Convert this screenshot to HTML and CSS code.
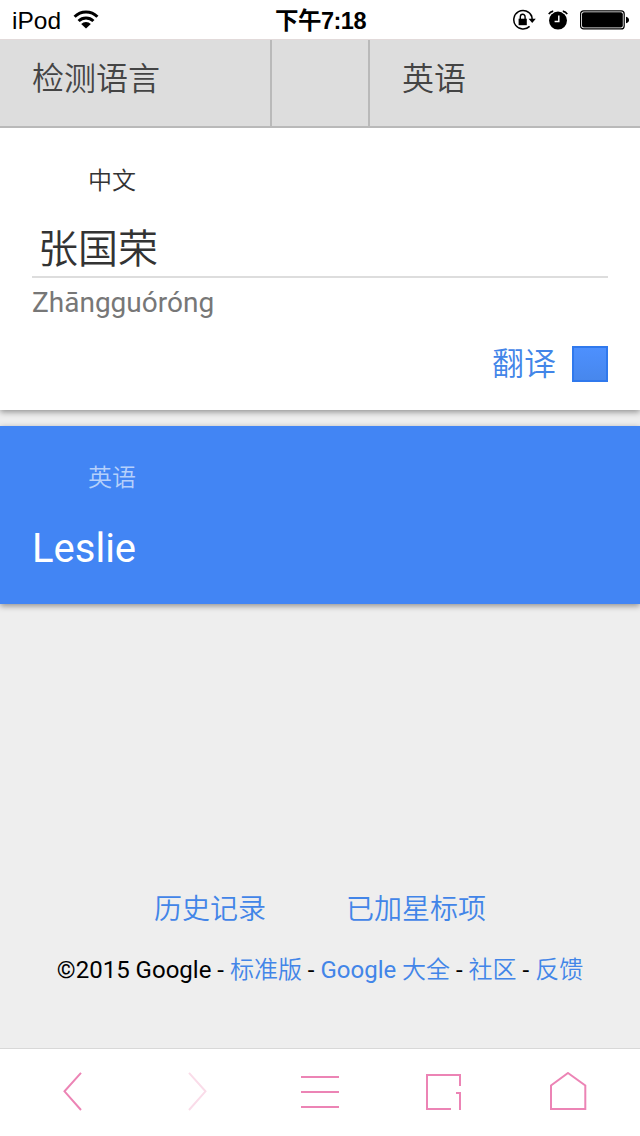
FILE: index.html
```html
<!DOCTYPE html>
<html lang="zh-CN">
<head>
	<meta charset="UTF-8">
	<title>Google 翻译</title>
	<meta name="viewport" content="width=device-width, initial-scale=1.0">
	<link rel="stylesheet" href="styles.css">
</head>
<body>

	<div class="status-bar">
		<div class="status-left">
			<span>iPod</span>
			<svg class="wifi" width="26" height="20" viewBox="0 0 26 20">
				<g fill="none" stroke="#000" stroke-width="3">
					<path d="M1.6 6.7a16.2 16.2 0 0 1 22.8 0"/>
					<path d="M5.6 11a10.5 10.5 0 0 1 14.8 0"/>
				</g>
				<path d="M13 18.6l-4.8-4.5a6.8 6.8 0 0 1 9.6 0z"/>
			</svg>
		</div>
		<div class="status-time">下午7:18</div>
		<div class="status-right">
			<svg class="lock" width="24" height="22" viewBox="0 0 24 22">
				<path d="M19.7 7.2A9.3 9.3 0 1 0 17.6 17.4" fill="none" stroke="#000" stroke-width="1.5"/>
				<path d="M19.2 6.1a9.3 9.3 0 0 1 .9 4" fill="none" stroke="#000" stroke-width="1.5"/>
				<path d="M16.6 9.7h7.2l-3.6 4.2z"/>
				<path d="M6.6 9.7h8.2v6.5H6.6z"/>
				<path d="M8.3 10V7.9a2.4 2.7 0 0 1 4.8 0V10" fill="none" stroke="#000" stroke-width="1.4"/>
			</svg>
			<svg class="alarm" width="20" height="20" viewBox="0 0 20 20">
				<circle cx="10" cy="10.6" r="9"/>
				<path d="M.8 4.2Q2 1.6 5.2 1.1M19.2 4.2Q18 1.6 14.8 1.1" fill="none" stroke="#fff" stroke-width="4"/>
				<path d="M.8 4.2Q2 1.6 5.2 1.1M19.2 4.2Q18 1.6 14.8 1.1" fill="none" stroke="#000" stroke-width="1.6"/>
				<path d="M10.8 5.5v6H6.6" fill="none" stroke="#fff" stroke-width="1.5"/>
			</svg>
			<svg class="battery" width="49" height="20" viewBox="0 0 49 20">
				<rect x=".6" y=".9" width="43.6" height="18" rx="3" fill="none" stroke="#000" stroke-width="1.2"/>
				<rect x="2" y="2.3" width="40.8" height="15.2" rx="2"/>
				<path d="M46 6.7q3 .8 3 3.3t-3 3.3z"/>
			</svg>
		</div>
	</div>

	<div class="lang-bar">
		<div class="lang lang-from">检测语言</div>
		<div class="lang lang-swap"></div>
		<div class="lang lang-to">英语</div>
	</div>

	<div class="card source">
		<div class="label">中文</div>
		<div class="input">张国荣</div>
		<div class="translit">Zhāngguóróng</div>
		<div class="submit">
			<a>翻译</a>
			<span class="go"></span>
		</div>
	</div>

	<div class="card result">
		<div class="label">英语</div>
		<div class="output">Leslie</div>
	</div>

	<div class="links">
		<a>历史记录</a>
		<a>已加星标项</a>
	</div>

	<div class="footer">©2015 Google - <a>标准版</a> - <a><span>Google</span> 大全</a> - <a>社区</a> - <a>反馈</a></div>

	<div class="toolbar">
		<svg viewBox="0 0 40 40"><path d="M29 .8L12.5 19.3 29 38"/></svg>
		<svg class="disabled" viewBox="0 0 40 40"><path d="M13 .8l16.5 18.5L13 38"/></svg>
		<svg viewBox="0 0 40 40"><path d="M1 5h38M1 20h38M1 35h38"/></svg>
		<svg viewBox="0 0 40 40"><path d="M27 37H3V3h33v11M32 21h4v17"/></svg>
		<svg viewBox="0 0 40 40"><path d="M20 1l17.3 12.5V37H3V13.5z"/></svg>
	</div>

</body>
</html>
```

FILE: styles.css
```css
* {
	margin: 0;
	padding: 0;
	box-sizing: border-box;
}

body {
	display: flex;
	flex-direction: column;
	height: 1136px;
	overflow: hidden;
	background: #eee;
	font-family: Roboto, "Noto Sans CJK SC", sans-serif;
	font-weight: 350;
}

a {
	color: #4285e8;
}

/* status bar */

.status-bar {
	display: grid;
	grid-template-columns: 1fr auto 1fr;
	align-items: center;
	height: 39px;
	padding: 1px 11px 0 12px;
	background: #fff;
	color: #000;
	font: 24.5px/36px "Liberation Sans", "Noto Sans CJK SC", sans-serif;
}

.status-left,
.status-right {
	display: flex;
	align-items: center;
}

.status-left span {
	padding-top: 2px;
}

.status-right {
	justify-content: flex-end;
}

.wifi {
	margin-left: 12px;
}

.status-time {
	padding-top: 2px;
	font-size: 23.5px;
	font-weight: bold;
	letter-spacing: -0.5px;
}

.alarm {
	margin: 0 12px 0 12px;
}

/* language picker */

.lang-bar {
	position: relative;
	z-index: 1;
	display: flex;
	height: 89px;
	background: #ddd;
	border-top: 1px solid #e2dada;
	border-bottom: 2px solid #b9b9b9;
}

.lang {
	padding-left: 32px;
	font-size: 32px;
	line-height: 79px;
	color: #444;
}

.lang-from {
	width: 270px;
}

.lang-swap {
	width: 100px;
	border-left: 2px solid #b9b9b9;
	border-right: 2px solid #b9b9b9;
}

/* cards */

.card {
	padding: 0 32px;
	box-shadow: 0 2px 6px rgba(0, 0, 0, 0.4);
}

.label {
	padding-left: 56px;
	font-size: 24px;
	line-height: 36px;
}

.source {
	height: 282px;
	padding-top: 35px;
	margin-bottom: 16px;
	background: #fff;
	color: #333;
}

.input {
	height: 79px;
	padding: 21px 0 0 6px;
	border-bottom: 2px solid #ddd;
	font-size: 40px;
	line-height: 60px;
}

.translit {
	margin-top: 8px;
	font-size: 28px;
	font-weight: 400;
	line-height: 34px;
	color: #777;
}

.submit {
	display: flex;
	justify-content: flex-end;
	align-items: center;
	height: 48px;
	margin-top: 20px;
}

.submit a {
	margin-right: 16px;
	padding-bottom: 6px;
	font-size: 32px;
}

.go {
	width: 36px;
	height: 36px;
	background: linear-gradient(#4d90fe, #4787ed);
	border: 2px solid #3079ed;
}

.result {
	height: 178px;
	padding-top: 34px;
	background: #4285f4;
	color: #fff;
}

.result .label {
	color: #b5d0fb;
}

.output {
	margin-top: 29px;
	font-size: 40px;
	font-weight: 400;
	line-height: 48px;
}

/* bottom links */

.links {
	display: flex;
	justify-content: center;
	gap: 80px;
	margin-top: 286px;
	font-size: 28px;
	line-height: 40px;
}

.footer {
	margin-top: 22px;
	text-align: center;
	white-space: nowrap;
	font-size: 24px;
	font-weight: 400;
	line-height: 36px;
	color: #000;
}

.footer a {
	font-weight: 350;
}

.footer a span {
	font-weight: 400;
}

/* browser toolbar */

.toolbar {
	display: flex;
	justify-content: space-between;
	height: 88px;
	margin-top: auto;
	padding: 23px 52px 0;
	background: #fff;
	border-top: 1px solid #d8d8d8;
}

.toolbar svg {
	width: 40px;
	height: 40px;
	fill: none;
	stroke: #ec84b5;
	stroke-width: 2;
}

.toolbar .disabled {
	stroke: #fadce9;
}
```
